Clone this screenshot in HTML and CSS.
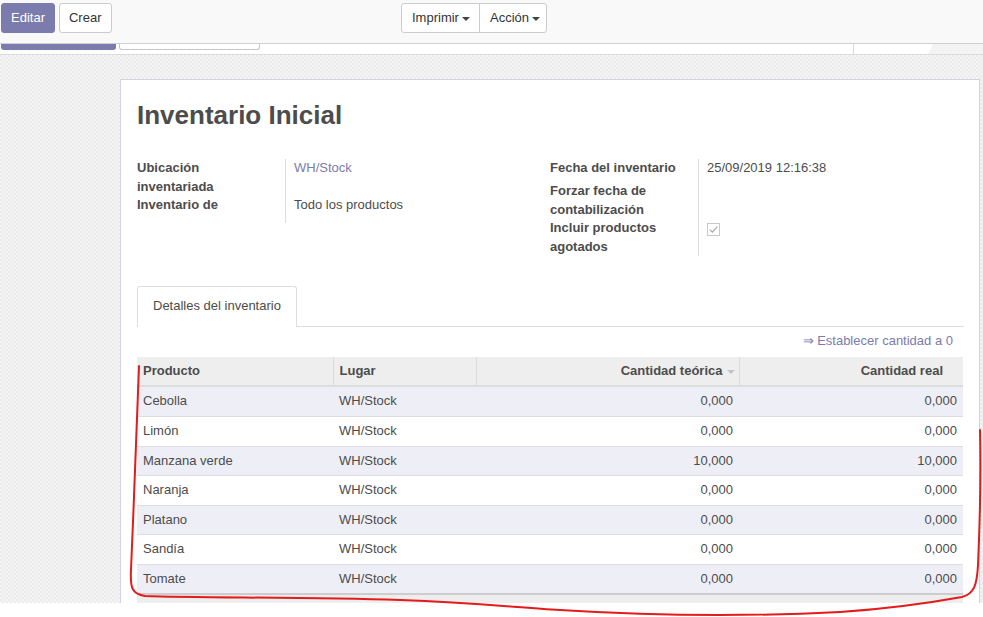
FILE: index.html
```html
<!DOCTYPE html>
<html lang="es">
<head>
<meta charset="utf-8">
<title>Inventario Inicial</title>
<link rel="stylesheet" href="styles.css">
</head>
<body>
<div class="topbar">
  <div class="tb-left">
    <button class="btn btn-primary">Editar</button>
    <button class="btn btn-default">Crear</button>
  </div>
  <div class="btn-group">
    <button class="btn btn-default">Imprimir<span class="caret"></span></button>
    <button class="btn btn-default">Acción<span class="caret"></span></button>
  </div>
</div>
<div class="strip">
  <div class="stub stub-primary"></div>
  <div class="stub stub-default"></div>
  <div class="strip-right"><div class="strip-gray"></div></div>
</div>
<div class="main">
  <div class="sheet">
    <h1 class="title">Inventario Inicial</h1>
    <div class="groups">
      <div class="group">
        <div class="row"><div class="lbl">Ubicación inventariada</div><div class="val link">WH/Stock</div></div>
        <div class="row"><div class="lbl">Inventario de</div><div class="val">Todo los productos</div></div>
        <div class="row row-end"><div class="lbl"></div><div class="val"></div></div>
      </div>
      <div class="group">
        <div class="row"><div class="lbl">Fecha del inventario</div><div class="val">25/09/2019 12:16:38</div></div>
        <div class="row"><div class="lbl">Forzar fecha de contabilización</div><div class="val"></div></div>
        <div class="row"><div class="lbl">Incluir productos agotados</div><div class="val"><span class="checkbox"><svg width="13" height="13" viewBox="0 0 13 13"><rect x="0.5" y="0.5" width="12" height="12" fill="#fff" stroke="#c8c8c8"/><path d="M2.8 6.6 L5.4 9.2 L10.3 3.6" fill="none" stroke="#a8a8a8" stroke-width="1.2"/></svg></span></div></div>
      </div>
    </div>
    <div class="tabs">
      <div class="tab active">Detalles del inventario</div>
    </div>
    <div class="actions"><span class="link">⇒ Establecer cantidad a 0</span></div>
    <table class="list">
      <colgroup><col class="c1"><col class="c2"><col class="c3"><col class="c4"></colgroup>
      <thead>
        <tr><th>Producto</th><th>Lugar</th><th class="num sorted">Cantidad teórica<span class="sort-caret"></span></th><th class="num real">Cantidad real</th></tr>
      </thead>
      <tbody>
        <tr><td>Cebolla</td><td>WH/Stock</td><td class="num">0,000</td><td class="num">0,000</td></tr>
        <tr><td>Limón</td><td>WH/Stock</td><td class="num">0,000</td><td class="num">0,000</td></tr>
        <tr><td>Manzana verde</td><td>WH/Stock</td><td class="num">10,000</td><td class="num">10,000</td></tr>
        <tr><td>Naranja</td><td>WH/Stock</td><td class="num">0,000</td><td class="num">0,000</td></tr>
        <tr><td>Platano</td><td>WH/Stock</td><td class="num">0,000</td><td class="num">0,000</td></tr>
        <tr><td>Sandía</td><td>WH/Stock</td><td class="num">0,000</td><td class="num">0,000</td></tr>
        <tr><td>Tomate</td><td>WH/Stock</td><td class="num">0,000</td><td class="num">0,000</td></tr>
      </tbody>
      <tfoot><tr><td></td><td></td><td></td><td></td></tr></tfoot>
    </table>
  </div>
</div>
<svg class="annotation" width="983" height="617" viewBox="0 0 983 617">
  <path d="M139,366 C137,420 134,500 131,570 C130,588 132,594 145,596 C200,598 300,597 400,600 C480,603 520,608 560,610 C640,615 740,617 840,612 C900,608 940,601 962,597 C974,594 977,585 978,565 C980,520 981,470 980,430" fill="none" stroke="#e31b1b" stroke-width="2" stroke-linecap="round"/>
</svg>
</body>
</html>
```

FILE: styles.css
```css
* { box-sizing: border-box; }
html, body { margin: 0; padding: 0; }
body {
  width: 983px;
  height: 617px;
  overflow: hidden;
  position: relative;
  background: #fff;
  font-family: "Liberation Sans", Arial, sans-serif;
  font-size: 13px;
  line-height: 1.428571;
  color: #4c4c4c;
}

/* control panel */
.topbar {
  height: 44px;
  background: #f9f9f9;
  border-bottom: 1px solid #cfcfcf;
  display: flex;
  align-items: flex-start;
  padding: 3px 0 0 1px;
}
.tb-left { display: flex; gap: 4px; width: 400px; }
.btn {
  font-family: inherit;
  font-size: 13px;
  line-height: 18px;
  height: 30px;
  padding: 5px 9px;
  border-radius: 3px;
  border: 1px solid #ccc;
  background: #fff;
  color: #333;
  display: inline-flex;
  align-items: center;
  margin: 0;
}
.btn-primary { background: #7c7bad; border-color: #7c7bad; color: #fff; }
.btn-default + .btn-default { margin: 0; }
.tb-left .btn-default { padding: 5px 10px 5px 9px; }
.btn-group { display: flex; }
.btn-group .btn:first-child { border-radius: 3px 0 0 3px; width: 79px; padding-left: 10px; }
.btn-group .btn:last-child { border-radius: 0 3px 3px 0; margin-left: -1px; width: 68px; padding-left: 10px; }
.caret {
  display: inline-block;
  width: 0; height: 0;
  margin-left: 3px;
  margin-top: 2px;
  border-top: 4px solid #444;
  border-left: 4px solid transparent;
  border-right: 4px solid transparent;
}

/* cut-off second bar */
.strip {
  height: 11px;
  border-bottom: 1px solid #dcdcdc;
  display: flex;
  align-items: flex-start;
}
.stub { height: 6px; }
.stub-primary { margin-left: 1px; width: 115px; background: #7c7bad; border-radius: 0 0 3px 3px; }
.stub-default { margin-left: 3px; width: 141px; height: 6px; border: 1px solid #c6c6c6; border-top: 0; border-radius: 0 0 3px 3px; }
.strip-right {
  margin-left: auto;
  width: 130px;
  height: 10px;
  border-left: 1px solid #dcdcdc;
  display: flex;
  justify-content: flex-end;
}
.strip-gray {
  width: 55px;
  height: 10px;
  background: #f3f3f3;
  clip-path: polygon(5px 0, 100% 0, 100% 100%, 0 100%);
}

/* main area */
.main {
  height: 548px;
  overflow: hidden;
  padding-top: 24px;
  background-color: #f3f3f3;
  background-image: repeating-conic-gradient(#f5f5f5 0 25%, #ebebeb 0 50%);
  background-size: 4px 4px;
}
.sheet {
  margin-left: 120px;
  width: 860px;
  min-height: 600px;
  background: #fff;
  border: 1px solid #d3d3dc;
  padding: 20px 15px 0 16px;
}
.title {
  margin: 0;
  font-size: 26px;
  font-weight: bold;
  line-height: 1.2;
  color: #4c4c4c;
}

.groups { display: flex; margin-top: 28px; }
.group { width: 413px; display: flex; flex-direction: column; }
.row { display: flex; min-height: 23px; }
.row-end { min-height: 4px; }
.lbl {
  width: 149px;
  flex: none;
  padding-right: 10px;
  border-right: 1px solid #ddd;
  font-weight: bold;
}
.val { padding-left: 8px; flex: 1; }
.link { color: #7c7bad; }
.checkbox { display: inline-block; margin-top: 4px; vertical-align: top; }
.checkbox svg { display: block; }

/* tabs */
.tabs {
  margin-top: 30px;
  display: flex;
  border-bottom: 1px solid #ddd;
}
.tab {
  padding: 10px 15px;
  border: 1px solid #ddd;
  border-bottom: 0;
  border-radius: 3px 3px 0 0;
  background: #fff;
  margin-bottom: -1px;
  height: 41px;
  color: #4c4c4c;
}
.actions { text-align: right; padding: 5px 11px 0 0; height: 30px; }

/* list */
.list {
  width: 826px;
  border-collapse: collapse;
  table-layout: fixed;
}
.c1 { width: 196px; }
.c2 { width: 143px; }
.c3 { width: 263px; }
.c4 { width: 224px; }
.list th {
  background: #eee;
  font-weight: bold;
  text-align: left;
  padding: 5px 6px 5px 6px;
  line-height: 18px;
  border-bottom: 2px solid #ddd;
  border-left: 1px solid #dcdcdc;
  white-space: nowrap;
}
.list th:first-child { border-left: 0; }
.list th.num { text-align: right; }
.list th.sorted { padding-right: 4px; }
.list th.real { padding-right: 20px; }
.sort-caret {
  display: inline-block;
  width: 0; height: 0;
  margin-left: 4px;
  vertical-align: middle;
  border-top: 4px solid #c2c2c2;
  border-left: 4px solid transparent;
  border-right: 4px solid transparent;
}
.list td {
  padding: 5px 6px;
  height: 29.5px;
  border-top: 1px solid #ddd;
  white-space: nowrap;
}
.list td.num { text-align: right; }
.list tbody tr:nth-child(odd) td { background: #eeeff6; }
.list tfoot td {
  background: #eee;
  height: 9px;
  padding: 0;
  border-top: 2px solid #cdcdcd;
  border-bottom: 1px solid #cdcdcd;
}

.annotation {
  position: absolute;
  left: 0;
  top: 0;
  pointer-events: none;
}
```
